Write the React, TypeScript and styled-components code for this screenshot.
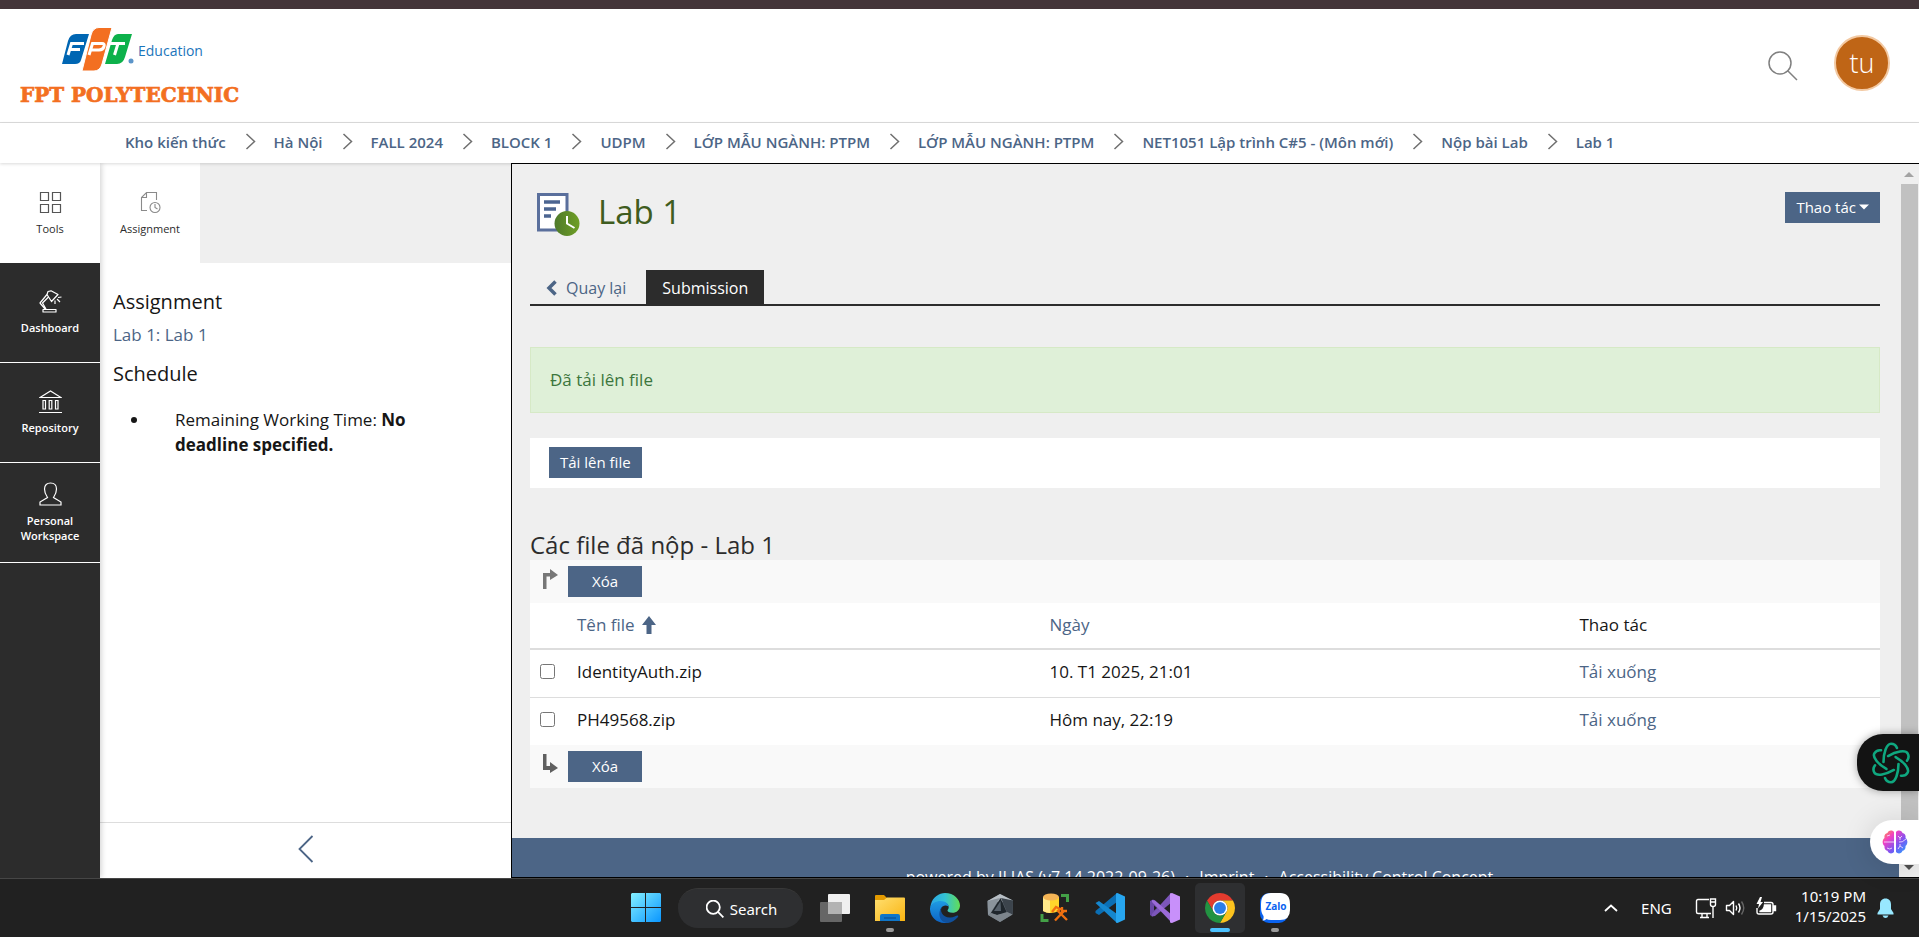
import React from "react";
import styled, { createGlobalStyle, css } from "styled-components";

const blue = "#4c6586";
const dark = "#2c2c2c";
const line = "#dddddd";

const GlobalStyle = createGlobalStyle`
  *, *::before, *::after { box-sizing: border-box; }
  body {
    margin: 0;
    background: #fff;
    color: #161616;
    font-family: "Open Sans", "Noto Sans", sans-serif;
    font-size: 17px;
    font-weight: 400;
    line-height: 25px;
  }
  h1, h2, h3, p, ul, ol { margin: 0; padding: 0; font-weight: 400; }
  ul, ol { list-style: none; }
  a { color: ${blue}; text-decoration: none; }
  b { font-weight: 700; }
  button { font: inherit; border: 0; padding: 0; margin: 0; background: none; color: inherit; cursor: pointer; }
  svg { display: block; flex: none; }
`;

const Page = styled.div`
  display: flex;
  flex-direction: column;
  height: 100vh;
  overflow: hidden;
`;

const WindowEdge = styled.div`
  flex: none;
  height: 9px;
  background: #443539;
`;

const Header = styled.header`
  flex: none;
  display: flex;
  align-items: center;
  justify-content: space-between;
  height: 114px;
  padding: 0 29px 2px 16px;
  border-bottom: 1px solid ${line};
`;

const HeaderTools = styled.div`
  display: flex;
  align-items: center;
  gap: 36px;
  padding-bottom: 4px;
`;

const SearchButton = styled.button`
  padding-top: 6px;
`;

const Avatar = styled.button`
  width: 56px;
  height: 56px;
  border-radius: 50%;
  border: 2px solid #f3c9a2;
  background: #bf6516;
  color: #fff;
  font-size: 27px;
  font-weight: 300;
  line-height: 50px;
`;

const Breadcrumbs = styled.nav`
  position: relative;
  z-index: 2;
  flex: none;
  height: 40px;
  padding: 0 0 3px 125px;
  display: flex;
  align-items: center;
  background: #fff;
  box-shadow: 0 1px 3px rgba(0, 0, 0, 0.15);

  ol { display: flex; align-items: center; }
  li { display: flex; align-items: center; }
  a { font-size: 15px; font-weight: 600; line-height: 20px; white-space: nowrap; }
  svg { margin: 0 18px 0 19px; }
`;

const Workspace = styled.div`
  flex: 1;
  min-height: 0;
  display: flex;
`;

const MainBar = styled.nav`
  flex: none;
  width: 100px;
  background: ${dark};
  box-shadow: 1px 0 6px rgba(0, 0, 0, 0.2);
  z-index: 1;
`;

const BarEntry = styled.button<{ $active?: boolean }>`
  display: flex;
  flex-direction: column;
  align-items: center;
  justify-content: center;
  gap: 7px;
  width: 100px;
  height: 100px;
  font-size: 11px;
  line-height: 15px;
  ${(p) =>
    p.$active
      ? css`
          background: #fff;
          color: ${dark};
        `
      : css`
          color: #fff;
          font-weight: 600;
          border-bottom: 1px solid #fff;
        `}
`;

const Slate = styled.aside`
  flex: none;
  width: 411px;
  display: flex;
  flex-direction: column;
  background: #fff;
`;

const SlateTabs = styled.div`
  height: 100px;
  background: #efefef;
`;

const SlateBody = styled.section`
  flex: 1;
  padding: 26px 13px;

  h3 { font-size: 20px; line-height: 26px; }
  p { padding: 7px 0 14px; }
  ul { padding: 20px 60px 0 18px; }
  li { display: flex; gap: 38px; }
  li::before {
    content: "";
    flex: none;
    width: 6px;
    height: 6px;
    margin-top: 10px;
    border-radius: 50%;
    background: #161616;
  }
`;

const SlateClose = styled.button`
  height: 56px;
  display: flex;
  align-items: center;
  justify-content: center;
  padding-bottom: 4px;
  border-top: 1px solid ${line};
`;

const Main = styled.main`
  flex: 1;
  min-width: 0;
  display: flex;
  border: 1px solid #000;
  border-right: 0;
  background: #efefef;
  overflow: hidden;
  position: relative;
  z-index: 3;
`;

const Scrolled = styled.div`
  flex: 1;
  min-width: 0;
`;

const Content = styled.div`
  padding: 28px 19px 50px 18px;
`;

const TitleRow = styled.div`
  display: flex;
  align-items: flex-start;
  justify-content: space-between;
  height: 78px;
`;

const Title = styled.h1`
  display: flex;
  align-items: flex-start;
  gap: 18px;
  padding-left: 6px;
  color: #3f5c20;
  font-size: 33px;
  line-height: 40px;
`;

const Button = styled.button<{ $wide?: boolean }>`
  display: inline-flex;
  align-items: center;
  justify-content: center;
  gap: 3px;
  height: 31px;
  padding: 0 ${(p) => (p.$wide ? 24 : 11)}px 2px;
  background: ${blue};
  color: #fff;
  font-size: 15px;
  line-height: 20px;
`;

const Tabs = styled.nav`
  display: flex;
  border-bottom: 2px solid ${dark};
`;

const Tab = styled.a<{ $active?: boolean }>`
  display: flex;
  align-items: center;
  gap: 8px;
  height: 34px;
  padding: 2px 16px 0;
  font-size: 16px;
  line-height: 32px;
  ${(p) =>
    p.$active &&
    css`
      margin-left: 4px;
      background: ${dark};
      color: #fff;
    `}
`;

const Alert = styled.div`
  margin-top: 41px;
  padding: 19px;
  border: 1px solid #d6e9c6;
  background: #dff0d8;
  color: #3c763d;
  line-height: 26px;
`;

const Toolbar = styled.div`
  display: flex;
  margin-top: 25px;
  padding: 9px 19px 10px;
  background: #fff;
`;

const SectionTitle = styled.h2`
  margin-top: 41px;
  color: ${dark};
  font-size: 24px;
  line-height: 31px;
`;

const CommandRow = styled.div`
  display: flex;
  gap: 8px;
  padding: 6px 10px;
  background: #f9f9f9;

  svg { margin-top: 3px; }
`;

const FileTable = styled.table`
  width: 100%;
  table-layout: fixed;
  border-collapse: collapse;
  background: #fff;

  th, td { padding: 9px 10px 13px; text-align: left; font-weight: 400; }
  th { padding-bottom: 11px; border-bottom: 2px solid ${line}; }
  tbody tr + tr td { border-top: 1px solid ${line}; }
  col.pick { width: 37px; }
  col.name { width: 35%; }
  col.action { width: 23%; }
  input { display: block; width: 15px; height: 15px; margin: 0; }
`;

const SortLink = styled.a`
  display: inline-flex;
  align-items: center;
  gap: 7px;
`;

const Footer = styled.footer`
  display: flex;
  justify-content: center;
  gap: 10px;
  height: 80px;
  padding: 29px 12px 0 0;
  background: ${blue};
  color: #fff;
  font-size: 16px;
  line-height: 20px;
  white-space: nowrap;

  a { color: #fff; }
`;

const ScrollTrack = styled.div`
  flex: none;
  width: 20px;
  display: flex;
  flex-direction: column;
  align-items: center;
  padding: 8px 0 7px;
`;

const ScrollThumb = styled.div`
  flex: 1;
  width: 17px;
  margin: 7px 0 22px 1px;
  background: #c1c1c1;
`;

const SideTools = styled.div`
  position: absolute;
  right: 0;
  bottom: 73px;
  z-index: 4;
  display: flex;
  flex-direction: column;
  align-items: flex-end;
  gap: 29px;
`;

const SideTool = styled.button<{ $dark?: boolean }>`
  display: flex;
  align-items: center;
  ${(p) =>
    p.$dark
      ? css`
          width: 62px;
          height: 57px;
          padding-left: 14px;
          border-radius: 26px 0 0 26px;
          background: #131313;
          box-shadow: 0 0 8px rgba(0, 0, 0, 0.35);
        `
      : css`
          width: 49px;
          height: 44px;
          padding-left: 12px;
          border-radius: 22px 0 0 22px;
          background: #fff;
          box-shadow: 0 2px 30px rgba(0, 0, 0, 0.14);
        `}
`;

const Taskbar = styled.footer`
  position: relative;
  z-index: 3;
  flex: none;
  display: grid;
  grid-template-columns: 1fr auto 1fr;
  height: 59px;
  border-top: 1px solid #464646;
  background: #212121;
  color: #fff;
  font-family: "Noto Sans", "Open Sans", sans-serif;
  font-size: 15px;
  line-height: 20px;
`;

const Apps = styled.div`
  grid-column: 2;
  display: flex;
  align-items: center;
  gap: 5px;
  padding-left: 1px;
`;

const AppButton = styled.button<{ $active?: boolean; $mark?: "on" | "front" }>`
  position: relative;
  display: flex;
  align-items: center;
  justify-content: center;
  width: 50px;
  height: 50px;
  border-radius: 5px;
  background: ${(p) => (p.$active ? "#2e2f31" : "none")};

  &::after {
    content: "";
    position: absolute;
    bottom: 1px;
    width: ${(p) => (p.$mark === "front" ? 20 : 8)}px;
    height: 4px;
    border-radius: 2px;
    background: ${(p) => (p.$mark === "front" ? "#4cc2ff" : p.$mark ? "#9a9a9a" : "none")};
  }
`;

const SearchBox = styled.button`
  display: flex;
  align-items: center;
  justify-content: center;
  gap: 6px;
  width: 125px;
  height: 40px;
  margin: 0 2px;
  padding-left: 3px;
  border-radius: 20px;
  background: #2e2f31;
  border-top: 1px solid #383838;
`;

const Tray = styled.div`
  grid-column: 3;
  justify-self: end;
  display: flex;
  align-items: center;
  padding-right: 25px;
`;

const TrayGroup = styled.button`
  display: flex;
  align-items: center;
  gap: 8px;
  margin-left: 23px;
`;

const Clock = styled.time`
  margin: 0 11px 0 18px;
  padding-bottom: 4px;
  text-align: right;
`;

/* ---------- drawings ---------- */

const Logo = () => (
  <svg width="232" height="90" viewBox="0 0 232 90" role="img" aria-label="FPT Education FPT Polytechnic">
    <g transform="translate(-16 -20)">
      <path d="M76 34H89L81 60Q80 64 75 64H62L68 41Q70 34 76 34Z" fill="#0066b3" />
      <path d="M118 34H132L125 57Q123 64 117 64H105L112 40Q114 34 118 34Z" fill="#0db14b" />
      <path d="M99 27.500H112L102 64Q100 71 94 71H82L91 35Q93 27.500 99 27.500Z" fill="#f36f21" stroke="#fff" strokeWidth="1" />
      <g fill="none" stroke="#fff" strokeWidth="3">
        <path d="M68 55L71.500 43.500H84M69.500 49.500H80" />
        <path d="M89 55L92.500 43.500H102Q105 43.500 104 46.500Q103 50 99 50H91.500" />
        <path d="M110 43.500H125M118 43.500L114.500 55" />
      </g>
      <circle cx="131" cy="61" r="2.500" fill="#5c95c9" />
      <text x="138" y="56" fontFamily="Open Sans" fontWeight="400" fontSize="14" fill="#1b75bb">Education</text>
      <text x="20" y="102" fontFamily="DejaVu Serif" fontWeight="700" fontSize="20" fill="#f36f21" stroke="#f36f21" strokeWidth="0.700">FPT POLYTECHNIC</text>
    </g>
  </svg>
);

const SearchIcon = ({ size = 30, color = "#808080", width = 1.5 }) => (
  <svg width={size} height={size} viewBox="0 0 30 30" fill="none" stroke={color} strokeWidth={width}>
    <circle cx="12" cy="12" r="11" />
    <path d="M19.500 19.500L29 29" />
  </svg>
);

const Chevron = () => (
  <svg width="11" height="17" viewBox="0 0 11 17" fill="none" stroke="#6f6f6f" strokeWidth="1.500">
    <path d="M1.500 1L9.500 8.500L1.500 16" />
  </svg>
);

const ToolsIcon = () => (
  <svg width="23" height="23" viewBox="0 0 23 23" fill="none" stroke="#555" strokeWidth="1.200">
    <path d="M1.500 1.500H9.500V9.500H1.500ZM13.500 1.500H21.500V9.500H13.500ZM1.500 13.500H9.500V21.500H1.500ZM13.500 13.500H21.500V21.500H13.500Z" />
  </svg>
);

const AssignmentIcon = () => (
  <svg width="23" height="23" viewBox="0 0 23 23" fill="none" stroke="#8a8a8a" strokeWidth="1.100">
    <path d="M8 19.500H2.500V6.500L7.500 1.500H17.500V9M7.500 1.500V6.500H2.500" />
    <circle cx="16" cy="16.500" r="5" />
    <path d="M16 13V16.500L18.500 18" />
  </svg>
);

const LampIcon = () => (
  <svg width="23" height="23" viewBox="0 0 23 23" fill="none" stroke="#fff" strokeWidth="1.200" strokeLinejoin="round">
    <path d="M4 19.500H17V22H4ZM6.500 19.500L1 13L8 4.500M7 19L3.500 13L9.500 7" />
    <path d="M8 4.500L9 1.500L12 0.800L19 4.500L12.500 11.500Z" />
    <path d="M16 10.500V14M18 9L21 12M19 7.500L22.500 7" />
  </svg>
);

const RepositoryIcon = () => (
  <svg width="23" height="23" viewBox="0 0 23 23" fill="none" stroke="#fff" strokeWidth="1.200">
    <path d="M1 7.500L11.500 1L22 7.500ZM0 22.500H23" />
    <path d="M4 10.500H6.500V19H4ZM10.200 10.500H12.800V19H10.200ZM16.500 10.500H19V19H16.500Z" />
  </svg>
);

const PersonIcon = () => (
  <svg width="23" height="24" viewBox="0 0 23 24" fill="none" stroke="#fff" strokeWidth="1.200">
    <path d="M1 23V20L8.500 15.500C6 12 5.500 10 5.500 7C5.500 3 8 1 11.500 1S17.500 3 17.500 7C17.500 10 17 12 14.500 15.500L22 20V23Z" />
  </svg>
);

const ExerciseIcon = () => (
  <svg width="44" height="45" viewBox="0 0 44 45">
    <defs>
      <linearGradient id="clock" x1="0" x2="1">
        <stop offset="0" stopColor="#4f7a2b" />
        <stop offset="1" stopColor="#6f9f25" />
      </linearGradient>
    </defs>
    <path d="M2.500 2.500H31V38H2.500Z" fill="#fff" stroke="#5a6f9c" strokeWidth="3" />
    <path d="M8 10H24M8 17H20M8 24H15" stroke="#4c6591" strokeWidth="3.500" />
    <circle cx="31" cy="31.500" r="12.500" fill="url(#clock)" />
    <path d="M31 24V31.500L38.500 36" fill="none" stroke="#fff" strokeWidth="2" />
  </svg>
);

const SideArrow = ({ down = false }) => (
  <svg width="20" height="20" viewBox="0 0 20 20" fill={down ? "#606060" : "#777"}>
    {down ? (
      <path d="M3 0H6.500V12H10V8L18 14L10 19V16H3Z" />
    ) : (
      <path d="M3 20V4H10V0L18 6L10 11V7.500H6.500V20Z" />
    )}
  </svg>
);

const KnotIcon = () => (
  <svg width="40" height="42" viewBox="-20 -21 40 42" fill="none" stroke="#0fa77f" strokeWidth="2.600" strokeLinecap="round">
    {[0, 60, 120, 180, 240, 300].map((angle) => (
      <path key={angle} transform={`rotate(${angle})`} d="M-7.500 -1C-7.500 -10 -4.500 -19.200 0 -19.200C2.500 -19.200 5 -17.500 6 -15" />
    ))}
  </svg>
);

const BrainIcon = () => (
  <svg width="26" height="24" viewBox="0 0 26 24">
    <defs>
      <linearGradient id="brain" x1="0" y1="0" x2="1" y2="1">
        <stop offset="0" stopColor="#ff9a3c" />
        <stop offset="0.300" stopColor="#f23fc4" />
        <stop offset="0.620" stopColor="#7a55f2" />
        <stop offset="1" stopColor="#23a8ff" />
      </linearGradient>
    </defs>
    <path
      fill="url(#brain)"
      d="M12 2C10 -0.500 6 0.300 5.500 3C3 3.500 2 5.500 2.500 8C0 10 0 14 2.500 16C2 19 4 20.500 5.500 20.800C6.500 24 10.500 24 12 22ZM14 2C16 -0.500 20 0.300 20.500 3C23 3.500 24 5.500 23.500 8C26 10 26 14 23.500 16C24 19 22 20.500 20.500 20.800C19.500 24 15.500 24 14 22Z"
    />
    <path d="M2 12H12M5 6L8 5M5 18Q8 20 10 18M16 6L18 8L20 6M18 8V10M17 12Q20 13 24 9M16 19L18 16L21 18M18 16V14" fill="none" stroke="#f3d9ff" strokeWidth="0.900" />
  </svg>
);

const WindowsIcon = () => (
  <svg width="30" height="30" viewBox="0 0 30 30">
    <defs>
      <linearGradient id="win" x1="0" y1="0" x2="1" y2="1">
        <stop offset="0" stopColor="#84f0ff" />
        <stop offset="1" stopColor="#0a96ff" />
      </linearGradient>
    </defs>
    <path d="M1 0H14V14H0V1ZM15 0H29L30 1V14H15ZM0 15H14V29H1L0 28ZM15 15H30V28L29 29H15Z" fill="url(#win)" />
  </svg>
);

const TaskViewIcon = () => (
  <svg width="30" height="30" viewBox="0 0 30 30">
    <rect x="0" y="9" width="22" height="20" rx="1" fill="#666" />
    <rect x="8" y="1" width="22" height="20" rx="1" fill="#f0f0f0" />
    <path d="M8 9H22V21H8Z" fill="#b3b3b3" />
  </svg>
);

const ExplorerIcon = () => (
  <svg width="30" height="30" viewBox="0 0 30 30">
    <defs>
      <linearGradient id="folder" x1="0" y1="0" x2="1" y2="1">
        <stop offset="0" stopColor="#ffdf70" />
        <stop offset="1" stopColor="#f9b411" />
      </linearGradient>
    </defs>
    <path d="M0 3Q0 2 1 2H9L12 5V10H0Z" fill="#e39a00" />
    <path d="M0 7H9L12 4.500H29Q30 4.500 30 5.500V28H0Z" fill="url(#folder)" />
    <path d="M5 28V23Q5 21 7 21H23Q25 21 25 23V28Z" fill="#0f76c9" />
    <path d="M9 25H21" stroke="#0a4f93" strokeWidth="1.200" />
  </svg>
);

const EdgeIcon = () => (
  <svg width="30" height="30" viewBox="0 0 30 30">
    <defs>
      <linearGradient id="edgeTop" x1="0" x2="1">
        <stop offset="0" stopColor="#2aa5e6" />
        <stop offset="0.500" stopColor="#33c2d4" />
        <stop offset="1" stopColor="#62dd55" />
      </linearGradient>
      <linearGradient id="edgeLeft" x1="0" y1="0" x2="0" y2="1">
        <stop offset="0" stopColor="#1e9be3" />
        <stop offset="1" stopColor="#0d63c4" />
      </linearGradient>
    </defs>
    <path d="M1 11C3 4 9 0 15 0C24 0 30 6.500 30 12.500C30 17 26.500 19.800 22.500 19.800C19 19.800 17.500 18.500 17.500 17.600C17.500 16.800 18.700 16.300 18.700 14C18.700 11 15.500 9 11 9C6 9 2 11 0 15Z" fill="url(#edgeTop)" />
    <path d="M0 15C1.500 10 6 8 10.500 8C15.500 8 18.700 11 18.700 14C18.500 12.500 15 11.500 12.500 13.500C8 17 10 25 19 29.500C9 32 -0.500 25 0 15Z" fill="url(#edgeLeft)" />
    <path d="M12.500 13.500C9 17 12 24.500 20 24.500C24 24.500 26 22.500 27.500 22.500C28.500 22.500 28.500 23.500 27.500 24.500C25 27.500 21.500 29.800 17.500 29.900C9 29.500 7 19 12.500 13.500Z" fill="#10509c" />
  </svg>
);

const CubeIcon = () => (
  <svg width="30" height="30" viewBox="0 0 30 30">
    <path d="M15 1L28 7.500L27.500 21.500L15 29L3 22L2.500 8Z" fill="#5f6871" />
    <path d="M15 1L28 7.500L15 9L2.500 8Z" fill="#b8bfc5" />
    <path d="M2.500 8L15 5L5 21L3 22Z" fill="#8b949c" />
    <path d="M28 7.500L27.500 21.500L22 19L16 5Z" fill="#3c444c" />
    <path d="M15.500 5L22 20L12 22L6 20Z" fill="#1f262c" />
    <path d="M9 18L15.500 8L16 18Z" fill="#56606a" />
    <path d="M3 22L6 20L12 22L22 19L27.500 21.500L15 29Z" fill="#7d858c" />
  </svg>
);

const DatabaseIcon = () => (
  <svg width="30" height="30" viewBox="0 0 30 30">
    <path d="M3 4V18Q10 22 19 18V4Z" fill="#ffd62b" />
    <path d="M3 4V18Q6 20 10 20V5Z" fill="#ffe98a" />
    <ellipse cx="11" cy="4" rx="8" ry="3.500" fill="#f4b455" />
    <path d="M21 2.500H27.500V9M2 21V27.500H8.500" fill="none" stroke="#43a047" strokeWidth="3" />
    <path d="M12 19L16 14L20 16L18 18L27 27M15 27.500L24 18M22 14V18H27" fill="none" stroke="#f07010" strokeWidth="2.400" />
  </svg>
);

const CodeIcon = () => (
  <svg width="30" height="30" viewBox="0 0 30 30">
    <path d="M22 0L22 9L4 22L0.500 20V18Z" fill="#0b6fb5" />
    <path d="M0.500 10L4 8L22 21V30Z" fill="#1587cf" />
    <path d="M21 0.500L22.500 0L30 3.500V26.500L22.500 30L21 29.500Z" fill="#27a6f0" />
  </svg>
);

const VisualStudioIcon = () => (
  <svg width="30" height="30" viewBox="0 0 30 30">
    <path d="M0 8L3 6.500L5 7.500L13 15L4 22.500L2 23.500L0 22Z" fill="#6a48a8" />
    <path d="M4 12.500V17.500L7 15Z" fill="#212121" />
    <path d="M21 0L22 9L5 23L2 23.500V21Z" fill="#7c56ba" />
    <path d="M2 7L5 7.500L22 22V30L2 9Z" fill="#9b6bd8" />
    <path d="M20 0.500L22 0L30 3.500V26.500L22 30L20 29.500Z" fill="#c890fa" />
  </svg>
);

const ChromeIcon = () => (
  <svg width="30" height="30" viewBox="0 0 48 48">
    <path d="M24 12H44.780A24 24 0 0 0 3.220 12L13.610 30A12 12 0 0 1 24 12Z" fill="#e33b2e" />
    <path d="M34.390 30L24 48A24 24 0 0 0 44.780 12H24A12 12 0 0 1 34.390 30Z" fill="#fcc31e" />
    <path d="M13.610 30L3.220 12A24 24 0 0 0 24 48L34.390 30A12 12 0 0 1 13.610 30Z" fill="#229342" />
    <circle cx="24" cy="24" r="12" fill="#fff" />
    <circle cx="24" cy="24" r="9.500" fill="#2b7de9" />
  </svg>
);

const ZaloIcon = () => (
  <svg width="30" height="30" viewBox="0 0 30 30">
    <rect width="28" height="30" rx="9" fill="#0a63f0" />
    <path d="M11 0H20Q30 0 30 11V17Q30 27 20 27H11Q8 27 6.500 26Q5 27.500 2.500 27.500Q4 26 3.500 23Q1 20 1 14V11Q1 0 11 0Z" fill="#fff" />
    <text x="16" y="17" textAnchor="middle" fontFamily="Open Sans" fontWeight="700" fontSize="10" fill="#0a63f0">Zalo</text>
  </svg>
);

const TrayIcons = () => (
  <>
    <svg width="22" height="22" viewBox="0 0 22 22" fill="none" stroke="#fff" strokeWidth="1.400">
      <path d="M14 2.500H3Q1.500 2.500 1.500 4V15Q1.500 16.500 3 16.500H16M7 16.500V20M12 16.500V20M5 20.500H14M18 10V21" />
      <path d="M15.500 2H20.500V7.500Q20.500 9.500 18 9.500T15.500 7.500ZM16 5H20" />
    </svg>
    <svg width="22" height="22" viewBox="0 0 22 22" fill="none" stroke="#fff" strokeWidth="1.400" strokeLinejoin="round">
      <path d="M1.500 8.500H4.500L8.500 4.500V17.500L4.500 13.500H1.500Z" />
      <path d="M11 8.500Q12.500 11 11 13.500M13.500 6.500Q16.500 11 13.500 15.500" />
      <path d="M16.500 4.500Q21 11 16.500 17.500" stroke="#666" />
    </svg>
    <svg width="22" height="22" viewBox="0 0 22 22" fill="none" stroke="#fff" strokeWidth="1.400">
      <path d="M9 5.500H16Q18 5.500 18 7.500V15Q18 17 16 17H4Q2 17 2 15V11" />
      <path d="M9.500 8H15.500V14.500H4.500Q9 13 9.500 8ZM18.500 9H20.500V13.500H18.500Z" fill="#fff" />
      <path d="M5 0L1.500 7H4L3 11.500L8 5H5.500L7 0Z" fill="#fff" stroke="none" />
    </svg>
  </>
);

/* ---------- data ---------- */

const crumbs = [
  "Kho kiến thức",
  "Hà Nội",
  "FALL 2024",
  "BLOCK 1",
  "UDPM",
  "LỚP MẪU NGÀNH: PTPM",
  "LỚP MẪU NGÀNH: PTPM",
  "NET1051 Lập trình C#5 - (Môn mới)",
  "Nộp bài Lab",
  "Lab 1",
];

const files = [
  { name: "IdentityAuth.zip", date: "10. T1 2025, 21:01" },
  { name: "PH49568.zip", date: "Hôm nay, 22:19" },
];

export default function App() {
  return (
    <Page>
      <GlobalStyle />
      <WindowEdge />
      <Header>
        <a href="#home"><Logo /></a>
        <HeaderTools>
          <SearchButton aria-label="Search"><SearchIcon /></SearchButton>
          <Avatar>tu</Avatar>
        </HeaderTools>
      </Header>

      <Breadcrumbs aria-label="Breadcrumbs">
        <ol>
          {crumbs.map((crumb, i) => (
            <li key={i}>
              {i > 0 && <Chevron />}
              <a href={`#crumb-${i}`}>{crumb}</a>
            </li>
          ))}
        </ol>
      </Breadcrumbs>

      <Workspace>
        <MainBar>
          <BarEntry $active><ToolsIcon />Tools</BarEntry>
          <BarEntry><LampIcon />Dashboard</BarEntry>
          <BarEntry><RepositoryIcon />Repository</BarEntry>
          <BarEntry><PersonIcon /><span>Personal<br />Workspace</span></BarEntry>
        </MainBar>

        <Slate>
          <SlateTabs>
            <BarEntry $active><AssignmentIcon />Assignment</BarEntry>
          </SlateTabs>
          <SlateBody>
            <h3>Assignment</h3>
            <p><a href="#lab">Lab 1: Lab 1</a></p>
            <h3>Schedule</h3>
            <ul>
              <li><span>Remaining Working Time: <b>No deadline specified.</b></span></li>
            </ul>
          </SlateBody>
          <SlateClose aria-label="Close">
            <svg width="16" height="28" viewBox="0 0 16 28" fill="none" stroke={blue} strokeWidth="1.800">
              <path d="M14.500 1L1.500 14L14.500 27" />
            </svg>
          </SlateClose>
        </Slate>

        <Main>
          <Scrolled>
            <Content>
              <TitleRow>
                <Title><ExerciseIcon />Lab 1</Title>
                <Button>
                  Thao tác
                  <svg width="10" height="6" viewBox="0 0 10 6"><path d="M0 0.500H10L5 5.500Z" fill="#fff" /></svg>
                </Button>
              </TitleRow>
              <Tabs>
                <Tab href="#back">
                  <svg width="12" height="16" viewBox="0 0 12 16" fill="none" stroke={blue} strokeWidth="3.500"><path d="M9.500 1.500L3 8L9.500 14.500" /></svg>
                  Quay lại
                </Tab>
                <Tab href="#submission" $active>Submission</Tab>
              </Tabs>
              <Alert role="status">Đã tải lên file</Alert>
              <Toolbar><Button>Tải lên file</Button></Toolbar>
              <SectionTitle>Các file đã nộp - Lab 1</SectionTitle>
              <CommandRow><SideArrow /><Button $wide>Xóa</Button></CommandRow>
              <FileTable>
                <colgroup><col className="pick" /><col className="name" /><col /><col className="action" /></colgroup>
                <thead>
                  <tr>
                    <th />
                    <th>
                      <SortLink href="#name">
                        Tên file
                        <svg width="14" height="18" viewBox="0 0 14 18"><path d="M7 0L14 9H9.500V18H4.500V9H0Z" fill={blue} /></svg>
                      </SortLink>
                    </th>
                    <th><a href="#date">Ngày</a></th>
                    <th>Thao tác</th>
                  </tr>
                </thead>
                <tbody>
                  {files.map((file) => (
                    <tr key={file.name}>
                      <td><input type="checkbox" aria-label={file.name} /></td>
                      <td>{file.name}</td>
                      <td>{file.date}</td>
                      <td><a href="#download">Tải xuống</a></td>
                    </tr>
                  ))}
                </tbody>
              </FileTable>
              <CommandRow><SideArrow down /><Button $wide>Xóa</Button></CommandRow>
            </Content>
            <Footer>
              <span>powered by ILIAS (v7.14 2022-09-26)</span>
              <span>·</span>
              <a href="#imprint">Imprint</a>
              <span>·</span>
              <a href="#accessibility">Accessibility Control Concept</a>
            </Footer>
          </Scrolled>
          <ScrollTrack>
            <svg width="10" height="5" viewBox="0 0 10 5"><path d="M5 0L10 5H0Z" fill="#a3a3a3" /></svg>
            <ScrollThumb />
            <svg width="10" height="5" viewBox="0 0 10 5"><path d="M0 0H10L5 5Z" fill="#505050" /></svg>
          </ScrollTrack>
        </Main>
      </Workspace>

      <SideTools>
        <SideTool $dark aria-label="Assistant"><KnotIcon /></SideTool>
        <SideTool aria-label="Brain"><BrainIcon /></SideTool>
      </SideTools>

      <Taskbar>
        <Apps>
          <AppButton aria-label="Start"><WindowsIcon /></AppButton>
          <SearchBox><SearchIcon size={18} color="#fff" width={3} />Search</SearchBox>
          <AppButton aria-label="Task view"><TaskViewIcon /></AppButton>
          <AppButton aria-label="Explorer" $mark="on"><ExplorerIcon /></AppButton>
          <AppButton aria-label="Edge"><EdgeIcon /></AppButton>
          <AppButton aria-label="Cube"><CubeIcon /></AppButton>
          <AppButton aria-label="Database"><DatabaseIcon /></AppButton>
          <AppButton aria-label="Code"><CodeIcon /></AppButton>
          <AppButton aria-label="Visual Studio"><VisualStudioIcon /></AppButton>
          <AppButton aria-label="Chrome" $active $mark="front"><ChromeIcon /></AppButton>
          <AppButton aria-label="Zalo" $mark="on"><ZaloIcon /></AppButton>
        </Apps>
        <Tray>
          <button aria-label="More">
            <svg width="14" height="8" viewBox="0 0 14 8" fill="none" stroke="#fff" strokeWidth="1.800"><path d="M1 7L7 1.500L13 7" /></svg>
          </button>
          <TrayGroup>ENG</TrayGroup>
          <TrayGroup aria-label="Network, volume, battery"><TrayIcons /></TrayGroup>
          <Clock>10:19 PM<br />1/15/2025</Clock>
          <svg width="17" height="20" viewBox="0 0 17 20" fill="#98e8ff">
            <path d="M8.500 0.500C12 0.500 14 3 14 6.500V11L16.500 15V16.500H0.500V15L3 11V6.500C3 3 5 0.500 8.500 0.500ZM5.500 17.500H11.500Q10.500 20 8.500 20T5.500 17.500Z" />
          </svg>
        </Tray>
      </Taskbar>
    </Page>
  );
}
